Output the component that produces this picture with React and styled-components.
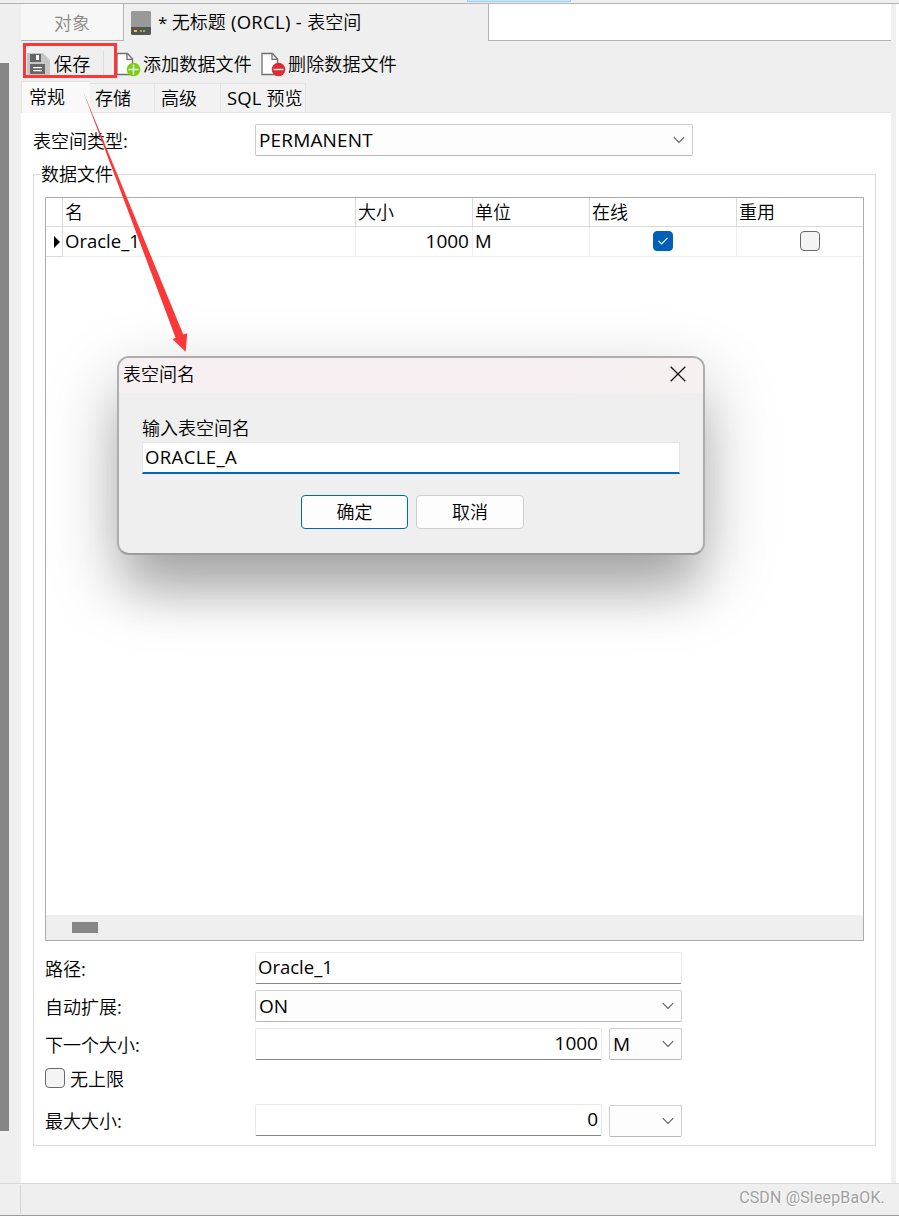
import React from "react";
import styled, { createGlobalStyle } from "styled-components";

const GlobalStyle = createGlobalStyle`
  * { box-sizing: border-box; }
  body {
    margin: 0;
    background: #efefef;
    color: #000;
    font: 350 18px/24px "Noto Sans CJK SC", sans-serif;
  }
`;

const Window = styled.div`
  position: relative;
  width: 899px;
  height: 1216px;
  overflow: hidden;
  display: flex;
  flex-direction: column;
  background: #efefef;
  white-space: nowrap;
`;

const TopStrip = styled.div`
  height: 4px;
  flex: none;
  padding-left: 467px;
  border-bottom: 1px solid #b4b4b4;
`;

const Highlight = styled.div`
  width: 104px;
  height: 2px;
  background: #cce8ff;
  border: 1px solid #99cdf8;
  border-top: 0;
`;

const Body = styled.div`
  display: flex;
  height: 1179px;
  flex: none;
`;

const LeftRail = styled.div`
  width: 21px;
  flex: none;
  padding-top: 59px;
`;

const RailThumb = styled.div`
  width: 9px;
  height: 1068px;
  background: #868686;
`;

const Main = styled.main`
  width: 870px;
  flex: none;
  display: flex;
  flex-direction: column;
`;

const Gutter = styled.div`
  width: 8px;
  border-left: 5px solid #efefef;
  background: #fff;
`;

const DocTabs = styled.div`
  display: flex;
  height: 37px;
  flex: none;
`;

const DocTab = styled.div`
  width: ${(p) => p.$width}px;
  display: flex;
  align-items: center;
  ${(p) =>
    p.$active
      ? "padding: 0 0 0 7px;"
      : "justify-content: center; padding-bottom: 1px; color: #8b8b8b; background: #f7f7f7; border: solid #b4b4b4; border-width: 0 1px 1px 0;"}
`;

const DocTitle = styled.span`
  margin: 0 0 1px 7px;
`;

const TabFiller = styled.div`
  flex: 1;
  background: #fff;
  border: solid #b4b4b4;
  border-width: 0 0 1px 1px;
  margin-left: -1px;
`;

const Latin = styled.span`
  font-family: "Open Sans", sans-serif;
  font-weight: 400;
  font-size: ${(p) => p.$size || 18.5}px;
  letter-spacing: ${(p) => p.$gap || 0}px;
`;

const Toolbar = styled.div`
  display: flex;
  height: 41px;
  flex: none;
  padding: 0 0 0 5px;
  align-items: center;
`;

const ToolButton = styled.button`
  display: flex;
  align-items: center;
  width: ${(p) => p.$width}px;
  height: 32px;
  margin: 5px 0 0;
  padding: 0;
  border: 0;
  background: none;
  font: inherit;
  color: inherit;
  text-align: left;
  letter-spacing: 0.15px;
  svg { flex: none; margin-right: ${(p) => p.$gap}px; }
  span { margin-bottom: 2px; }
`;

const ToolDivider = styled.div`
  width: 1px;
  height: 28px;
  margin: 6px 12px 0 0;
  background: #dcdcdc;
`;

const PageTabs = styled.div`
  display: flex;
  align-items: flex-end;
  height: 31px;
  flex: none;
  border-bottom: 1px solid #e3e3e3;
`;

const PageTab = styled.div`
  width: ${(p) => p.$width}px;
  height: ${(p) => (p.$active ? 32 : 29)}px;
  margin-bottom: ${(p) => (p.$active ? -1 : 0)}px;
  padding: ${(p) => (p.$active ? "2px 0 0 7px" : "1px 0 0 6px")};
  background: ${(p) => (p.$active ? "#f9f9f9" : "#f2f2f2")};
  border: solid #e3e3e3;
  border-width: ${(p) => (p.$active ? "1px 0 0 1px" : "1px 1px 0 0")};
  &:nth-child(2) { padding-left: 5px; }
`;

const Page = styled.section`
  height: 1070px;
  background: #fff;
  padding: 11px 15px 0 12px;
`;

const FormRow = styled.div`
  display: flex;
  height: ${(p) => p.$height || 32}px;
  margin-top: ${(p) => p.$top || 0}px;
`;

const Label = styled.label`
  width: ${(p) => p.$width}px;
  flex: none;
  padding-top: 4px;
`;

const SelectBox = styled.div`
  width: ${(p) => p.$width}px;
  height: 32px;
  margin: ${(p) => p.$nudge || 0}px 0 0 ${(p) => p.$left || 0}px;
  padding: 0 7px 1px 3px;
  display: flex;
  align-items: center;
  justify-content: space-between;
  background: #fdfdfd;
  border: 1px solid #cfcfcf;
  border-bottom-color: #b9b9b9;
  border-radius: 2px;
`;

const TextField = styled.div`
  width: ${(p) => p.$width}px;
  height: 32px;
  padding: 1px 3px 0 2px;
  text-align: ${(p) => p.$align || "left"};
  background: #fff;
  border: 1px solid #e9e9e9;
  border-bottom-color: #868686;
  border-radius: 2px;
`;

const Group = styled.fieldset`
  width: 843px;
  height: 984px;
  margin: 6px 0 0;
  padding: 0 11px;
  border: 1px solid #dcdcdc;
  min-width: 0;
`;

const Legend = styled.legend`
  height: 24px;
  line-height: 23px;
  margin-left: -4px;
  padding: 0;
`;

const Grid = styled.div`
  width: 819px;
  height: 744px;
  margin-top: 11px;
  border: 1px solid #acacac;
  display: flex;
  flex-direction: column;
  overflow: hidden;
`;

const GridRow = styled.div`
  display: grid;
  grid-template-columns: 17px 293px 117px 117px 147px 147px;
  height: ${(p) => (p.$head ? 29 : 30)}px;
`;

const Cell = styled.div`
  display: flex;
  align-items: center;
  justify-content: ${(p) => p.$justify || "flex-start"};
  padding: 0 ${(p) => (p.$justify === "flex-end" ? 3 : 0)}px ${(p) => (p.$strong ? 2 : 1)}px
    ${(p) => (p.$justify ? 0 : 2)}px;
  border: solid ${(p) => (p.$strong ? "#dadada" : "#eeeeee")};
  border-width: 0 1px 1px 0;
`;

const RowMarker = styled(Cell)`
  padding: 0 2px 0 0;
`;

const GridSpace = styled.div`
  flex: 1;
`;

const ScrollTrack = styled.div`
  height: 25px;
  padding: 7px 0 0 26px;
  background: #efefef;
`;

const ScrollThumb = styled.div`
  width: 26px;
  height: 11px;
  background: #868686;
`;

const CheckBox = styled.span`
  width: 20px;
  height: 20px;
  flex: none;
  display: inline-flex;
  align-items: center;
  justify-content: center;
  border-radius: 4px;
  border: 1px solid ${(p) => (p.$on ? "#005fb8" : "#696969")};
  background: ${(p) => (p.$on ? "#005fb8" : "#f4f4f4")};
`;

const CheckRow = styled.div`
  display: flex;
  align-items: center;
  gap: 5px;
  height: 20px;
  margin-top: 8px;
`;

const StatusBar = styled.footer`
  display: flex;
  height: 33px;
  flex: none;
  border-top: 1px solid #d8d8d8;
  border-bottom: 1px solid #999;
`;

const StatusCell = styled.div`
  width: 21px;
  margin: 1px 0;
  border-right: 1px solid #d5d5d5;
`;

const Watermark = styled.div`
  margin: 1px 14px 0 auto;
  font: 16px/26px Roboto, sans-serif;
  letter-spacing: 0.15px;
  color: #a0a0a0;
  text-shadow: 1px 1px 0 #fff;
`;

const Callout = styled.div`
  position: absolute;
  left: 23px;
  top: 43px;
  width: 94px;
  height: 35px;
  border: 3px solid #fb3838;
`;

const Arrow = styled.svg`
  position: absolute;
  left: 80px;
  top: 88px;
`;

const Dialog = styled.div`
  position: absolute;
  left: 117px;
  top: 356px;
  width: 588px;
  height: 199px;
  border: 2px solid #adadad;
  border-bottom-color: #9c9c9c;
  border-radius: 12px;
  background: #efefef;
  background-clip: padding-box;
  box-shadow: 0 26px 70px rgba(0, 0, 0, 0.27), 0 46px 46px -10px rgba(0, 0, 0, 0.16);
`;

const DialogTitle = styled.div`
  display: flex;
  justify-content: space-between;
  height: 35px;
  padding: 3px 17px 0 4px;
  border-radius: 10px 10px 0 0;
  background: linear-gradient(90deg, #f7eff2, #f8eff2 55%, #f6f0f1);
  svg { margin-top: 5px; }
`;

const DialogBody = styled.div`
  padding: 22px 23px 0;
`;

const DialogInput = styled.div`
  height: 32px;
  margin-top: 3px;
  padding: 1px 0 0 2px;
  background: #fff;
  border: 1px solid #e5e5e5;
  border-bottom: 2px solid #0067c0;
`;

const DialogActions = styled.div`
  display: flex;
  gap: 8px;
  margin: 21px 0 0 159px;
`;

const DialogButton = styled.button`
  width: ${(p) => (p.$primary ? 107 : 108)}px;
  height: 34px;
  padding: 0 0 2px;
  font: inherit;
  color: #000;
  background: #fdfdfd;
  border: 1px solid ${(p) => (p.$primary ? "#0067c0" : "#d0d0d0")};
  border-radius: 4px;
`;

const Chevron = () => (
  <svg width="12" height="8" viewBox="0 0 12 8" fill="none" stroke="#5f5f5f" strokeWidth="1.1">
    <path d="M.8 1.2 6 6.4l5.2-5.2" />
  </svg>
);

const DriveIcon = () => (
  <svg width="20" height="24" viewBox="0 0 20 24">
    <path d="M1 0h18l1 1v16H0V1z" fill="#999" />
    <path d="M0 16h20v7l-1 1H1l-1-1z" fill="#555" />
    <path d="M3 19h3v2H3z" fill="#ffc20e" />
    <path d="M9 19h2v2H9zM12 19h2v2h-2z" fill="#7cb968" />
  </svg>
);

const SaveIcon = () => (
  <svg width="24" height="24" viewBox="0 0 24 24">
    <path d="M1 1h16l7 7v14l-1 1H1z" fill="#c6c6c6" />
    <path d="M4 2h11v8H4z" fill="#666" />
    <path d="M10 3h3v5h-3z" fill="#f7f7f7" />
    <path d="M4 12h15v10H4z" fill="#666" />
    <path d="M7 15h9v1.3H7zM7 18h9v1.3H7z" fill="#fff" />
  </svg>
);

const FileIcon = ({ color, plus }) => (
  <svg width="25" height="25" viewBox="0 0 25 25">
    <path d="M1 1.5h10.5l5 5.5v15.500H1z" fill="#fff" stroke="#6e6e6e" strokeWidth="1.3" />
    <path d="M11 1.5v5.8h5.5" fill="none" stroke="#6e6e6e" strokeWidth="1.3" />
    <circle cx="17.5" cy="17.5" r="6.8" fill={color} />
    <path d={plus ? "M12.5 17.5h10M17.5 12.500v10" : "M12.5 17.5h10"} stroke="#fff" strokeWidth="1.4" />
  </svg>
);

export default function App() {
  return (
    <Window>
      <GlobalStyle />
      <TopStrip>
        <Highlight />
      </TopStrip>
      <Body>
        <LeftRail>
          <RailThumb />
        </LeftRail>
        <Main>
          <DocTabs>
            <DocTab $width={103}>对象</DocTab>
            <DocTab $width={365} $active>
              <DriveIcon />
              <DocTitle>
                <Latin $size={17}>* </Latin>无标题<Latin $gap={0.3}> (ORCL) - </Latin>表空间
              </DocTitle>
            </DocTab>
            <TabFiller />
          </DocTabs>
          <Toolbar>
            <ToolButton $width={77} $gap={4}>
              <SaveIcon />
              <span>保存</span>
            </ToolButton>
            <ToolDivider />
            <ToolButton $width={145} $gap={2}>
              <FileIcon color="#79d10d" plus />
              <span>添加数据文件</span>
            </ToolButton>
            <ToolButton $width={140} $gap={2}>
              <FileIcon color="#dd2a35" />
              <span>删除数据文件</span>
            </ToolButton>
          </Toolbar>
          <PageTabs>
            <PageTab $width={69} $active>常规</PageTab>
            <PageTab $width={65}>存储</PageTab>
            <PageTab $width={66}>高级</PageTab>
            <PageTab $width={85}>
              <Latin $gap={0.1}>SQL </Latin>预览
            </PageTab>
          </PageTabs>
          <Page>
            <FormRow>
              <Label $width={222}>表空间类型:</Label>
              <SelectBox $width={438}>
                <Latin $size={19} $gap={0.15}>PERMANENT</Latin>
                <Chevron />
              </SelectBox>
            </FormRow>
            <Group>
              <Legend>数据文件</Legend>
              <Grid>
                <GridRow $head>
                  <Cell $strong />
                  <Cell $strong>名</Cell>
                  <Cell $strong>大小</Cell>
                  <Cell $strong>单位</Cell>
                  <Cell $strong>在线</Cell>
                  <Cell $strong>重用</Cell>
                </GridRow>
                <GridRow>
                  <RowMarker $strong $justify="flex-end">
                    <svg width="6" height="12" viewBox="0 0 6 12">
                      <path d="M0 0v12l6-6z" />
                    </svg>
                  </RowMarker>
                  <Cell>
                    <Latin>Oracle_1</Latin>
                  </Cell>
                  <Cell $justify="flex-end">
                    <Latin $size={19}>1000</Latin>
                  </Cell>
                  <Cell>
                    <Latin>M</Latin>
                  </Cell>
                  <Cell $justify="center">
                    <CheckBox $on>
                      <svg width="10" height="8" viewBox="0 0 10 8" fill="none" stroke="#fff" strokeWidth="1.1">
                        <path d="M.5 3.8 3.6 7 9.500.8" />
                      </svg>
                    </CheckBox>
                  </Cell>
                  <Cell $justify="center">
                    <CheckBox />
                  </Cell>
                </GridRow>
                <GridSpace />
                <ScrollTrack>
                  <ScrollThumb />
                </ScrollTrack>
              </Grid>
              <FormRow $top={11}>
                <Label $width={210}>路径:</Label>
                <TextField $width={427}>
                  <Latin>Oracle_1</Latin>
                </TextField>
              </FormRow>
              <FormRow $top={6}>
                <Label $width={210}>自动扩展:</Label>
                <SelectBox $width={427}>
                  <Latin $size={19}>ON</Latin>
                  <Chevron />
                </SelectBox>
              </FormRow>
              <FormRow $top={6}>
                <Label $width={210}>下一个大小:</Label>
                <TextField $width={347} $align="right">
                  <Latin $size={19}>1000</Latin>
                </TextField>
                <SelectBox $width={73} $left={7}>
                  <Latin $size={19}>M</Latin>
                  <Chevron />
                </SelectBox>
              </FormRow>
              <CheckRow>
                <CheckBox />
                <span>无上限</span>
              </CheckRow>
              <FormRow $top={16}>
                <Label $width={210}>最大大小:</Label>
                <TextField $width={347} $align="right">
                  <Latin $size={19}>0</Latin>
                </TextField>
                <SelectBox $width={73} $left={7} $nudge={1}>
                  <span />
                  <Chevron />
                </SelectBox>
              </FormRow>
            </Group>
          </Page>
        </Main>
        <Gutter />
      </Body>
      <StatusBar>
        <StatusCell />
        <Watermark>CSDN @SleepBaOK.</Watermark>
      </StatusBar>
      <Callout />
      <Dialog>
        <DialogTitle>
          表空间名
          <svg width="16" height="16" viewBox="0 0 16 16" stroke="#111" strokeWidth="1.3">
            <path d="M.7.7l14.6 14.6M15.300.7.7 15.300" />
          </svg>
        </DialogTitle>
        <DialogBody>
          <div>输入表空间名</div>
          <DialogInput>
            <Latin $gap={0.4}>ORACLE_A</Latin>
          </DialogInput>
          <DialogActions>
            <DialogButton $primary>确定</DialogButton>
            <DialogButton>取消</DialogButton>
          </DialogActions>
        </DialogBody>
      </Dialog>
      <Arrow width="110" height="266" viewBox="80 88 110 266">
        <path d="M83 91 183.3 334.5 187.2 333.3 185.7 351.7 172.3 339 175.7 338z" fill="#fb3838" />
      </Arrow>
    </Window>
  );
}
